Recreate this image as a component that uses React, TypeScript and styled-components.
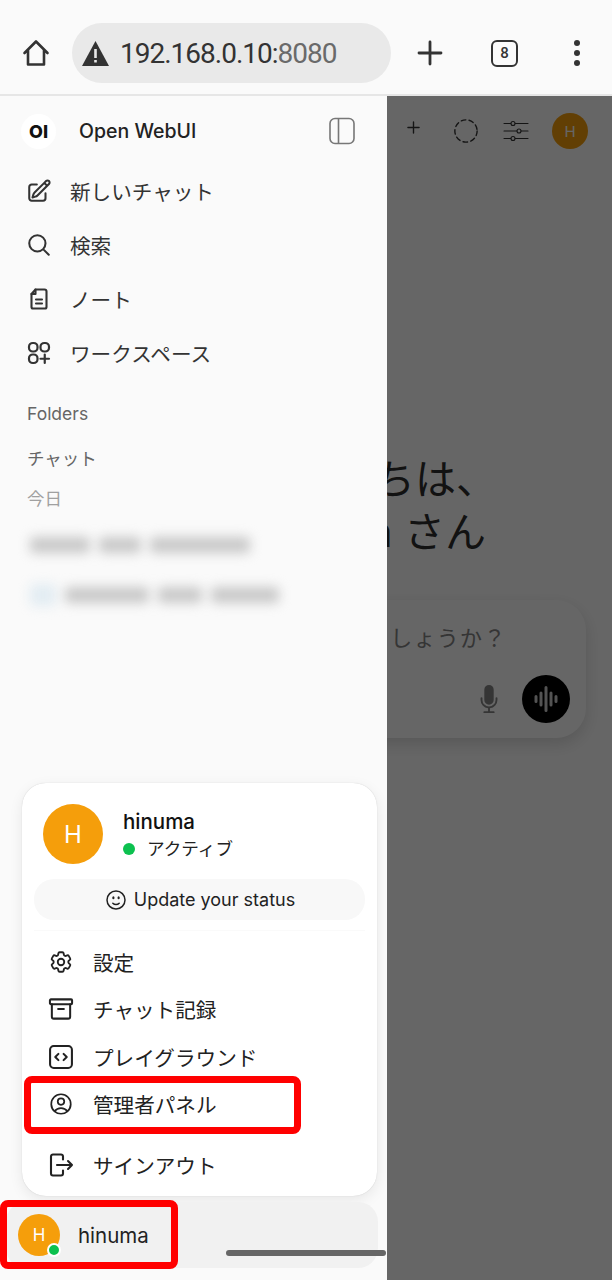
import styled, { createGlobalStyle } from "styled-components";
import {
  HiOutlinePencilSquare,
  HiOutlineMagnifyingGlass,
  HiOutlineFaceSmile,
  HiOutlineCog6Tooth,
  HiOutlineUserCircle,
  HiMicrophone,
} from "react-icons/hi2";

const GlobalStyle = createGlobalStyle`
  html, body { margin: 0; padding: 0; background: #fafafa; }
  * { box-sizing: border-box; }
  body { font-family: Inter, "Noto Sans CJK JP", "Noto Sans", sans-serif; color: #222; }
`;

const Page = styled.div`
  width: 612px;
  height: 1280px;
  display: flex;
  flex-direction: column;
  overflow: hidden;
  position: relative;
`;

/* browser chrome */
const BrowserBar = styled.header`
  height: 96px;
  flex: none;
  display: flex;
  align-items: center;
  padding: 22px 0 10px 22px;
  background: #fafafa;
  border-bottom: 2px solid #e6e6e6;
  color: #333;
`;
const ChromeIcon = styled.svg`
  flex: none;
  display: block;
`;
const AddressBar = styled.div`
  width: 319px;
  height: 60px;
  margin-left: 22px;
  border-radius: 30px;
  background: #e9e9e9;
  display: flex;
  align-items: center;
  padding-left: 10px;
  gap: 11px;
  font-family: Roboto, sans-serif;
  font-size: 28px;
  letter-spacing: -1px;
  color: #333;
`;
const Port = styled.span`
  color: #6a6a6a;
`;
const ChromeActions = styled.div`
  display: flex;
  align-items: center;
  margin-left: 26px;
  gap: 48px;
`;
const TabCount = styled.div`
  width: 27px;
  height: 27px;
  border: 2.5px solid #333;
  border-radius: 6px;
  display: flex;
  align-items: center;
  justify-content: center;
  font-family: Roboto, sans-serif;
  font-size: 15px;
  font-weight: 500;
  color: #333;
`;
const Dots = styled.div`
  display: flex;
  flex-direction: column;
  gap: 4px;
  margin-left: 8px;
`;
const Dot = styled.span`
  width: 6px;
  height: 6px;
  border-radius: 50%;
  background: #333;
`;

/* chat view behind the drawer */
const Content = styled.div`
  flex: 1;
  position: relative;
  overflow: hidden;
`;
const Main = styled.main`
  height: 100%;
  background: #fff;
  display: flex;
  flex-direction: column;
  padding: 0 26px;
`;
const MainHeader = styled.div`
  height: 70px;
  display: flex;
  align-items: center;
  justify-content: flex-end;
  gap: 24px;
  margin-right: -2px;
  color: #333;
`;
const HeaderPlus = styled.svg`
  margin: 0 9px 8px 0;
`;
const SmallAvatar = styled.div`
  width: 36px;
  height: 36px;
  border-radius: 50%;
  margin-left: -1px;
  background: #f59e0b;
  color: #fff;
  font-size: 15px;
  display: flex;
  align-items: center;
  justify-content: center;
`;
const Greeting = styled.h1`
  margin: 287px 0 0 225px;
  font-size: 41px;
  line-height: 53px;
  font-weight: 400;
  color: #2e2e2e;
  white-space: nowrap;
`;
const Composer = styled.div`
  margin-top: 41px;
  height: 138px;
  border-radius: 30px;
  background: #fff;
  box-shadow: 0 6px 16px rgba(0, 0, 0, 0.14);
  padding: 22px 16px 15px 38px;
  display: flex;
  flex-direction: column;
  justify-content: space-between;
`;
const Placeholder = styled.div`
  font-size: 22px;
  line-height: 32px;
  letter-spacing: 1.3px;
  color: #858585;
  white-space: nowrap;
`;
const ComposerActions = styled.div`
  display: flex;
  align-items: center;
  justify-content: flex-end;
  gap: 18px;
  color: #858585;
`;
const VoiceButton = styled.div`
  width: 48px;
  height: 48px;
  border-radius: 50%;
  background: #000;
  display: flex;
  align-items: center;
  justify-content: center;
`;
const Scrim = styled.div`
  position: absolute;
  inset: 0;
  background: rgba(0, 0, 0, 0.6);
`;

/* drawer */
const Sidebar = styled.aside`
  position: absolute;
  left: 0;
  top: 0;
  bottom: 0;
  width: 387px;
  background: #fafafa;
  display: flex;
  flex-direction: column;
`;
const SidebarHeader = styled.div`
  height: 70px;
  flex: none;
  display: flex;
  align-items: center;
  padding: 0 32px 0 21px;
`;
const LogoBadge = styled.div`
  width: 35px;
  height: 35px;
  border-radius: 50%;
  background: #fff;
  display: flex;
  align-items: center;
  justify-content: center;
  font-size: 18px;
  font-weight: 800;
  color: #111;
`;
const AppName = styled.div`
  margin-left: 23px;
  font-size: 19.5px;
  font-weight: 500;
  color: #222;
  flex: 1;
`;
const NavList = styled.nav`
  display: flex;
  flex-direction: column;
  margin-top: -2px;
`;
const NavRow = styled.div`
  height: 54px;
  display: flex;
  align-items: center;
  padding-left: 26px;
  gap: 18px;
  font-size: 20.6px;
  color: #333;
  svg {
    flex: none;
    width: 26px;
    height: 26px;
  }
`;
const SectionLabel = styled.div<{ $top: number; $muted?: boolean }>`
  margin: ${(p) => p.$top}px 0 0 27px;
  font-size: 17.5px;
  line-height: 24px;
  color: ${(p) => (p.$muted ? "#a0a0a0" : "#666")};
`;
const BlurRow = styled.div<{ $left: number; $top: number }>`
  display: flex;
  align-items: center;
  gap: 9px;
  margin: ${(p) => p.$top}px 0 0 ${(p) => p.$left}px;
  filter: blur(6px);
`;
const BlurBit = styled.span<{ $w: number; $tint?: boolean }>`
  width: ${(p) => p.$w}px;
  height: ${(p) => (p.$tint ? 22 : 16)}px;
  background: ${(p) => (p.$tint ? "#e2ecf2" : "#c8c8c8")};
  border-radius: 4px;
`;

/* user popup */
const Popup = styled.div`
  margin: auto 10px 6px 22px;
  height: 413px;
  flex: none;
  background: #fff;
  border-radius: 24px;
  box-shadow: 0 0 1px rgba(0, 0, 0, 0.2), 0 4px 14px rgba(0, 0, 0, 0.08);
  padding: 21px 12px 0;
  display: flex;
  flex-direction: column;
`;
const ProfileRow = styled.div`
  display: flex;
  align-items: center;
  gap: 20px;
  padding-left: 9px;
`;
const ProfileText = styled.div`
  padding-top: 2px;
`;
const Avatar = styled.div<{ $size: number; $font: number }>`
  position: relative;
  flex: none;
  width: ${(p) => p.$size}px;
  height: ${(p) => p.$size}px;
  border-radius: 50%;
  background: #f59e0b;
  color: #fff;
  font-size: ${(p) => p.$font}px;
  display: flex;
  align-items: center;
  justify-content: center;
`;
const ProfileName = styled.div`
  font-size: 20.5px;
  line-height: 28px;
  font-weight: 500;
  color: #111;
`;
const StatusLine = styled.div`
  display: flex;
  align-items: center;
  gap: 12px;
  font-size: 17.6px;
  line-height: 26px;
  color: #222;
`;
const StatusDot = styled.span`
  width: 12px;
  height: 12px;
  border-radius: 50%;
  background: #0cc14f;
`;
const StatusButton = styled.div`
  margin-top: 15px;
  height: 41px;
  flex: none;
  border-radius: 20px;
  background: #f8f8f8;
  display: flex;
  align-items: center;
  justify-content: center;
  gap: 6px;
  font-size: 18px;
  color: #222;
`;
const Divider = styled.hr`
  border: 0;
  height: 1px;
  background: #fafafa;
  margin: 10px 0 7px;
`;
const MenuRow = styled.div<{ $gap?: number }>`
  height: 47.5px;
  flex: none;
  display: flex;
  align-items: center;
  gap: 19px;
  padding-left: 14px;
  margin-top: ${(p) => p.$gap ?? 0}px;
  font-size: 20.6px;
  color: #222;
  svg {
    flex: none;
    width: 26px;
    height: 26px;
  }
`;
const UserBar = styled.div`
  margin: 0 9px 12px 6px;
  height: 66px;
  flex: none;
  background: #f1f1f1;
  border-radius: 20px;
  display: flex;
  align-items: center;
  gap: 18px;
  padding-left: 12px;
  font-size: 20.5px;
  color: #222;
`;
const OnlineBadge = styled.span`
  position: absolute;
  right: -1px;
  bottom: -1px;
  width: 14px;
  height: 14px;
  border-radius: 50%;
  background: #0cc14f;
  border: 2px solid #fff;
`;

/* things drawn over the screenshot */
const RedBox = styled.div<{ $x: number; $y: number; $w: number; $h: number }>`
  position: absolute;
  left: ${(p) => p.$x}px;
  top: ${(p) => p.$y}px;
  width: ${(p) => p.$w}px;
  height: ${(p) => p.$h}px;
  border: 7px solid #ff0000;
  border-radius: 8px;
`;
const GestureBar = styled.div`
  position: absolute;
  left: 226px;
  top: 1250px;
  width: 160px;
  height: 6px;
  border-radius: 3px;
  background: #666;
`;

const line = { fill: "none", stroke: "currentColor", strokeLinecap: "round", strokeLinejoin: "round" } as const;

const NoteIcon = () => (
  <svg viewBox="0 0 26 26" {...line} strokeWidth="2.1">
    <path d="M9.5 3.5h9a2 2 0 0 1 2 2V21a1.5 1.5 0 0 1-1.5 1.5H7A1.5 1.5 0 0 1 5.5 21V8z" />
    <path d="M9.5 3.5V8h-4" />
    <path d="M10 13.5h6M10 17.5h6" />
  </svg>
);
const WorkspaceIcon = () => (
  <svg viewBox="0 0 26 26" {...line} strokeWidth="2.2">
    <rect x="3" y="3" width="8.5" height="8.5" rx="3.8" />
    <rect x="14.5" y="3" width="8.5" height="8.5" rx="3.8" />
    <rect x="3" y="14.5" width="8.5" height="8.5" rx="3.8" />
    <path d="M18.75 14.5V23M14.5 18.75H23" />
  </svg>
);
const ArchiveIcon = () => (
  <svg viewBox="0 0 27 27" {...line} strokeWidth="2.1">
    <rect x="2" y="3.5" width="23" height="5" rx="1" />
    <path d="M4 8.5v13a2 2 0 0 0 2 2h15a2 2 0 0 0 2-2v-13" />
    <path d="M10.5 13.5h6" />
  </svg>
);
const CodeIcon = () => (
  <svg viewBox="0 0 25 25" {...line} strokeWidth="2">
    <rect x="2" y="2" width="21" height="21" rx="3.5" />
    <path d="M10 9.5l-3 3 3 3M15 9.5l3 3-3 3" />
  </svg>
);
const SignOutIcon = () => (
  <svg viewBox="0 0 26 26" {...line} strokeWidth="2.1">
    <path d="M15 7.5v-3a2 2 0 0 0-2-2H5a2 2 0 0 0-2 2v17a2 2 0 0 0 2 2h8a2 2 0 0 0 2-2v-3" />
    <path d="M9 13h15M20 9l4 4-4 4" />
  </svg>
);

export default function App() {
  return (
    <Page>
      <GlobalStyle />
      <BrowserBar>
        <ChromeIcon width="28" height="28" viewBox="0 0 28 28" {...line} strokeWidth="2.6">
          <path d="M2.5 14L14 2.5 25.5 14M6 11v14.5h16V11" />
        </ChromeIcon>
        <AddressBar>
          <ChromeIcon width="27" height="25" viewBox="0 0 27 25">
            <path d="M13.5 0L27 25H0z" fill="#333" />
            <path d="M12.2 8h2.6v9h-2.6zM12.2 19h2.6v2.6h-2.6z" fill="#e9e9e9" />
          </ChromeIcon>
          <span>
            192.168.0.10:<Port>8080</Port>
          </span>
        </AddressBar>
        <ChromeActions>
          <ChromeIcon width="26" height="26" viewBox="0 0 26 26" {...line} strokeWidth="2.8">
            <path d="M13 2v22M2 13h22" />
          </ChromeIcon>
          <TabCount>8</TabCount>
          <Dots>
            <Dot />
            <Dot />
            <Dot />
          </Dots>
        </ChromeActions>
      </BrowserBar>

      <Content>
        <Main>
          <MainHeader>
            <HeaderPlus width="13" height="13" viewBox="0 0 14 14" {...line} strokeWidth="1.5">
              <path d="M7 1v12M1 7h12" />
            </HeaderPlus>
            <svg width="26" height="26" viewBox="0 0 28 28" {...line} strokeWidth="1.5" strokeDasharray="5 3.5">
              <circle cx="14" cy="14" r="12" />
            </svg>
            <svg width="26" height="22" viewBox="0 0 26 22" {...line} strokeWidth="1.1">
              <path d="M1 3.5h24M1 11h24M1 18.5h24" />
              <circle cx="10" cy="3.5" r="2" fill="#fff" />
              <circle cx="16" cy="11" r="2" fill="#fff" />
              <circle cx="10" cy="18.5" r="2" fill="#fff" />
            </svg>
            <SmallAvatar>H</SmallAvatar>
          </MainHeader>
          <Greeting>
            こんにちは、
            <br />
            hinuma さん
          </Greeting>
          <Composer>
            <Placeholder>今日はどのようにお手伝いしましょうか？</Placeholder>
            <ComposerActions>
              <HiMicrophone size={30} />
              <VoiceButton>
                <svg width="24" height="28" viewBox="0 0 24 28" fill="none" stroke="#cfcfcf" strokeWidth="3" strokeLinecap="round">
                  <path d="M2 11.5v5M7 8v12M12 2.5v23M17 8v12M22 11.5v5" />
                </svg>
              </VoiceButton>
            </ComposerActions>
          </Composer>
        </Main>
        <Scrim />

        <Sidebar>
          <SidebarHeader>
            <LogoBadge>OI</LogoBadge>
            <AppName>Open WebUI</AppName>
            <svg width="26" height="28" viewBox="0 0 26 28" fill="none" stroke="#777" strokeWidth="1.6">
              <rect x="1" y="1.5" width="24" height="25" rx="5" />
              <path d="M9.5 1.5v25" />
            </svg>
          </SidebarHeader>
          <NavList>
            <NavRow>
              <HiOutlinePencilSquare strokeWidth={1.9} />
              新しいチャット
            </NavRow>
            <NavRow>
              <HiOutlineMagnifyingGlass strokeWidth={1.9} />
              検索
            </NavRow>
            <NavRow>
              <NoteIcon />
              ノート
            </NavRow>
            <NavRow>
              <WorkspaceIcon />
              ワークスペース
            </NavRow>
          </NavList>
          <SectionLabel $top={22}>Folders</SectionLabel>
          <SectionLabel $top={21}>チャット</SectionLabel>
          <SectionLabel $top={16} $muted>
            今日
          </SectionLabel>
          <BlurRow $left={30} $top={26}>
            <BlurBit $w={60} />
            <BlurBit $w={42} />
            <BlurBit $w={100} />
          </BlurRow>
          <BlurRow $left={30} $top={31}>
            <BlurBit $w={26} $tint />
            <BlurBit $w={84} />
            <BlurBit $w={44} />
            <BlurBit $w={68} />
          </BlurRow>

          <Popup>
            <ProfileRow>
              <Avatar $size={60} $font={24}>
                H
              </Avatar>
              <ProfileText>
                <ProfileName>hinuma</ProfileName>
                <StatusLine>
                  <StatusDot />
                  アクティブ
                </StatusLine>
              </ProfileText>
            </ProfileRow>
            <StatusButton>
              <HiOutlineFaceSmile size={24} />
              Update your status
            </StatusButton>
            <Divider />
            <MenuRow>
              <HiOutlineCog6Tooth strokeWidth={1.7} />
              設定
            </MenuRow>
            <MenuRow>
              <ArchiveIcon />
              チャット記録
            </MenuRow>
            <MenuRow>
              <CodeIcon />
              プレイグラウンド
            </MenuRow>
            <MenuRow>
              <HiOutlineUserCircle strokeWidth={1.6} />
              管理者パネル
            </MenuRow>
            <MenuRow $gap={13}>
              <SignOutIcon />
              サインアウト
            </MenuRow>
          </Popup>
          <UserBar>
            <Avatar $size={42} $font={17}>
              H
              <OnlineBadge />
            </Avatar>
            hinuma
          </UserBar>
        </Sidebar>
      </Content>

      <RedBox $x={24} $y={1076} $w={277} $h={58} />
      <RedBox $x={0} $y={1200} $w={178} $h={69} />
      <GestureBar />
    </Page>
  );
}
